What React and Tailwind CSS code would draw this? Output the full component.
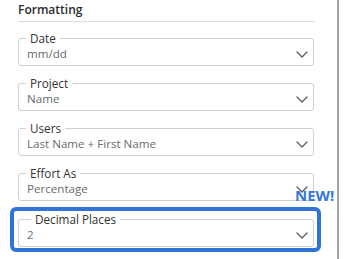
const fields = [
  { label: 'Date', value: 'mm/dd' },
  { label: 'Project', value: 'Name' },
  { label: 'Users', value: 'Last Name + First Name' },
  { label: 'Effort As', value: 'Percentage' },
];

function Chevron() {
  return (
    <svg width="12" height="7" viewBox="0 0 12 7" fill="none" className="shrink-0">
      <path d="M1 1 L6 6 L11 1" stroke="#5a5f66" strokeWidth="1.4" strokeLinecap="round" strokeLinejoin="round" />
    </svg>
  );
}

function Field({ label, value, legendClass = '-ml-[1px]' }) {
  return (
    <fieldset className="border border-[#cfcfcf] rounded-[3px] pl-2 pr-[5px] pb-[3px]">
      <legend className={`px-1 text-[11.7px] leading-[16px] text-[#333] ${legendClass}`}>{label}</legend>
      <div className="flex items-center justify-between">
        <span className="text-[11.6px] leading-[16px] text-[#6b6b6b]">{value}</span>
        <Chevron />
      </div>
    </fieldset>
  );
}

export default function App() {
  return (
    <div className="w-[343px] h-[259px] bg-white flex overflow-hidden font-['Open_Sans',sans-serif]">
      <div className="relative w-[339px] border-r-2 border-[#a3a3a3] shrink-0">
        <div className="pl-[18px] pr-[22px] pt-[1px]">
          <h3 className="text-[12px] leading-[18px] font-semibold text-[#2b2b2b]">Formatting</h3>
          <div className="mt-[2px] h-px bg-[#dcdcdc]" />
        </div>

        <div className="mt-[8px] flex flex-col gap-[9px] pl-[18px] pr-[23px]">
          {fields.map((f) => (
            <Field key={f.label} {...f} />
          ))}
        </div>

        <div className="mt-[6px] ml-[10px] mr-[16px] border-4 border-[#3174d8] rounded-[6px] pl-[4px] pr-[3px] pb-[1px]">
          <Field label="Decimal Places" value="2" legendClass="ml-[4px]" />
        </div>

        <span className="absolute left-[295px] top-[186px] text-[15px] leading-[18px] font-bold text-[#3478d8]">
          NEW!
        </span>
      </div>
    </div>
  );
}
